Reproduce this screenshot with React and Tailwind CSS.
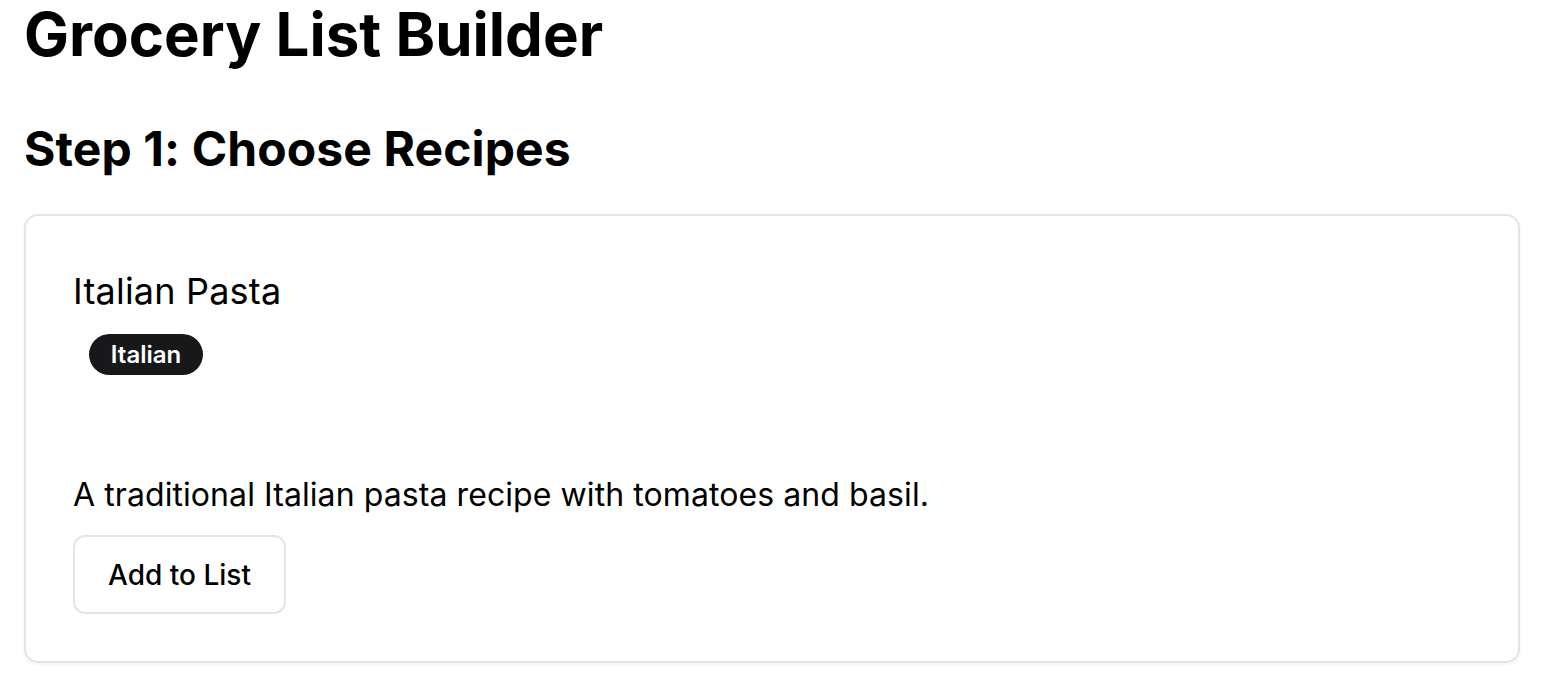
export default function App() {
  return (
    <div className="min-h-screen bg-white px-[24px] text-black" style={{ fontFamily: "Inter, 'Noto Sans', sans-serif" }}>
      <h1 className="text-[60px] font-bold leading-[68px]">Grocery List Builder</h1>
      <h2 className="mt-[54px] text-[48px] font-bold leading-[54px] tracking-[0.1px]">Step 1: Choose Recipes</h2>
      <div className="mt-[38px] w-[1496px] rounded-[14px] border-2 border-[#e4e4e7] px-[47px] pt-[55px] pb-[47px] shadow-[0_2px_4px_rgba(0,0,0,0.05)]">
        <h3 className="text-[36px] font-normal leading-[40px] tracking-[0.2px]">Italian Pasta</h3>
        <div className="mt-[23px] ml-[16px] flex">
          <span className="inline-flex h-[41px] w-[114px] items-center justify-center rounded-full bg-[#18181b] text-[24px] font-semibold text-white">Italian</span>
        </div>
        <p className="mt-[96px] text-[32px] leading-[48px] tracking-[0.08px]">A traditional Italian pasta recipe with tomatoes and basil.</p>
        <button className="mt-[16px] h-[79px] w-[213px] rounded-[12px] border-2 border-[#e4e4e7] bg-white text-[28px] font-medium">Add to List</button>
      </div>
    </div>
  );
}
